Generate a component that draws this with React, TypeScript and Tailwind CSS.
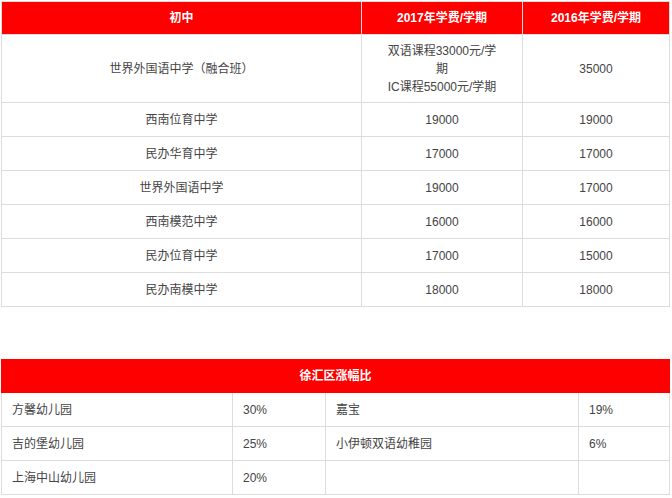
const font = { fontFamily: '"Liberation Sans", "Noto Sans CJK SC", sans-serif' }

const schools = [
  ['西南位育中学', '19000', '19000'],
  ['民办华育中学', '17000', '17000'],
  ['世界外国语中学', '19000', '17000'],
  ['西南模范中学', '16000', '16000'],
  ['民办位育中学', '17000', '15000'],
  ['民办南模中学', '18000', '18000'],
]

const rises = [
  ['方馨幼儿园', '30%', '嘉宝', '19%'],
  ['吉的堡幼儿园', '25%', '小伊顿双语幼稚园', '6%'],
  ['上海中山幼儿园', '20%', '', ''],
]

export default function App() {
  return (
    <div className="w-[672px] h-[498px] bg-white text-[12px] text-[#444]" style={font}>
      {/* 初中学费 */}
      <table className="mt-px ml-px w-[668px] border-collapse table-fixed">
        <colgroup>
          <col className="w-[360px]" />
          <col className="w-[161px]" />
          <col className="w-[147px]" />
        </colgroup>
        <thead>
          <tr className="h-[33px] bg-[#fe0000] text-white font-bold">
            <th className="border border-[#dcdcdc] text-center">初中</th>
            <th className="border border-[#dcdcdc] text-center">2017年学费/学期</th>
            <th className="border border-[#dcdcdc] text-center">2016年学费/学期</th>
          </tr>
        </thead>
        <tbody>
          <tr className="h-[68px]">
            <td className="border border-[#dcdcdc] text-center">世界外国语中学（融合班）</td>
            <td className="border border-[#dcdcdc] text-center px-[22px] leading-[18px]">
              双语课程33000元/学期
              <br />
              IC课程55000元/学期
            </td>
            <td className="border border-[#dcdcdc] text-center">35000</td>
          </tr>
          {schools.map(([name, a, b]) => (
            <tr key={name} className="h-[34px]">
              <td className="border border-[#dcdcdc] text-center">{name}</td>
              <td className="border border-[#dcdcdc] text-center">{a}</td>
              <td className="border border-[#dcdcdc] text-center">{b}</td>
            </tr>
          ))}
        </tbody>
      </table>

      {/* 徐汇区涨幅比 */}
      <table className="mt-[52px] ml-px w-[668px] border-collapse table-fixed">
        <colgroup>
          <col className="w-[231px]" />
          <col className="w-[93px]" />
          <col className="w-[253px]" />
          <col className="w-[91px]" />
        </colgroup>
        <thead>
          <tr className="h-[33px] bg-[#fe0000] text-white font-bold">
            <th colSpan={4} className="border border-[#fe0000] text-center">徐汇区涨幅比</th>
          </tr>
        </thead>
        <tbody>
          {rises.map(([a, ap, b, bp]) => (
            <tr key={a} className="h-[34px]">
              <td className="border border-[#dcdcdc] px-[10px]">{a}</td>
              <td className="border border-[#dcdcdc] px-[10px]">{ap}</td>
              <td className="border border-[#dcdcdc] px-[10px]">{b}</td>
              <td className="border border-[#dcdcdc] px-[10px]">{bp}</td>
            </tr>
          ))}
        </tbody>
      </table>
    </div>
  )
}
